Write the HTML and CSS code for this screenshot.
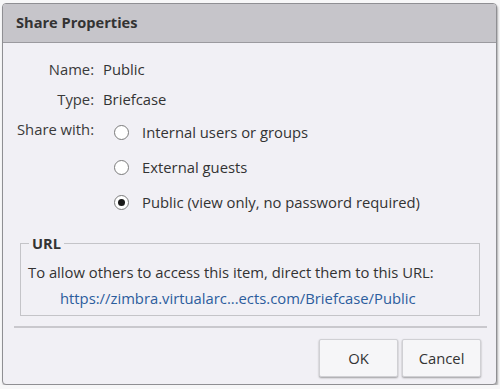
FILE: index.html
```html
<!DOCTYPE html>
<html lang="en">
  <head>
    <meta charset="UTF-8" />
    <title>Share Properties</title>
    <link rel="stylesheet" href="styles.css">
  </head>
  <body>
    <div class="dialog">
      <div class="dialog-title">Share Properties</div>
      <div class="dialog-body">
        <table class="props">
          <tr>
            <td class="prop-label">Name:</td>
            <td class="prop-value">Public</td>
          </tr>
          <tr>
            <td class="prop-label">Type:</td>
            <td class="prop-value">Briefcase</td>
          </tr>
          <tr>
            <td class="prop-label share-label">Share with:</td>
            <td class="share-options">
              <label class="radio"><span class="radio-dot"></span>Internal users or groups</label>
              <label class="radio"><span class="radio-dot"></span>External guests</label>
              <label class="radio"><span class="radio-dot checked"></span>Public (view only, no password required)</label>
            </td>
          </tr>
        </table>

        <fieldset class="url-box">
          <legend>URL</legend>
          <div class="url-text">To allow others to access this item, direct them to this URL:</div>
          <a class="url-link" href="#">https://zimbra.virtualarc...ects.com/Briefcase/Public</a>
        </fieldset>
      </div>
      <div class="dialog-footer">
        <button type="button" class="btn">OK</button>
        <button type="button" class="btn">Cancel</button>
      </div>
    </div>
  </body>
</html>
```

FILE: styles.css
```css
body {
  margin: 0;
  background-color: #f7f7f8;
  font-family: "Open Sans", "Noto Sans", sans-serif;
  font-size: 14.8px;
  color: #333;
}
.dialog {
  width: 493px;
  height: 380px;
  margin: 3px 0 0 2px;
  border: 1px solid #8f8f93;
  border-radius: 4px;
  background-color: #f1f0f5;
  box-shadow: 1px 2px 2px rgba(0, 0, 0, 0.3);
  overflow: hidden;
}
.dialog-title {
  height: 38px;
  line-height: 37px;
  padding-left: 13px;
  background-color: #c6c5ca;
  border-bottom: 1px solid #9b9a9f;
  font-weight: bold;
  font-size: 14.6px;
  color: #333;
}
.dialog-body {
  padding: 16px 16px 0 14px;
}
.props {
  border-collapse: collapse;
}
.props td {
  padding: 0;
  vertical-align: top;
}
.prop-label {
  width: 75px;
  text-align: right;
  padding-right: 9px !important;
  height: 30px;
  line-height: 20px;
  color: #3a3a3a;
  white-space: nowrap;
}
.prop-value {
  line-height: 20px;
}
.share-options {
  display: flex;
  flex-direction: column;
  gap: 15px;
  padding-left: 11px !important;
  padding-top: 3px !important;
}
.radio {
  display: flex;
  align-items: center;
  gap: 13px;
  line-height: 20px;
}
.radio-dot {
  width: 15px;
  height: 15px;
  border: 1px solid #7a7a7a;
  border-radius: 50%;
  background-color: #fff;
  box-sizing: border-box;
  display: flex;
  align-items: center;
  justify-content: center;
}
.radio-dot.checked::after {
  content: "";
  width: 7px;
  height: 7px;
  border-radius: 50%;
  background-color: #1a1a1a;
}
.url-box {
  margin: 21px 0 0 3px;
  padding: 9px 7px 7px 7px;
  border: 1px solid #c4c4c8;
}
.url-box legend {
  font-weight: bold;
  font-size: 14.6px;
  padding: 0 3px;
  margin-left: 1px;
}
.url-text {
  line-height: 20px;
}
.url-link {
  display: block;
  margin-top: 6px;
  padding-left: 32px;
  line-height: 20px;
  color: #2c5d9d;
  text-decoration: none;
}
.dialog-footer {
  margin: 10px 9px 0 11px;
  border-top: 2px solid #c9c8cd;
  display: flex;
  justify-content: flex-end;
  gap: 4px;
  padding: 11px 6px 0 0;
}
.btn {
  width: 79px;
  height: 38px;
  background-color: #f6f6f8;
  border: 1px solid #d0d0d4;
  border-radius: 2px;
  box-shadow: 0 1px 2px rgba(0, 0, 0, 0.35);
  font-family: inherit;
  font-size: 14.8px;
  color: #333;
  cursor: pointer;
}
```
